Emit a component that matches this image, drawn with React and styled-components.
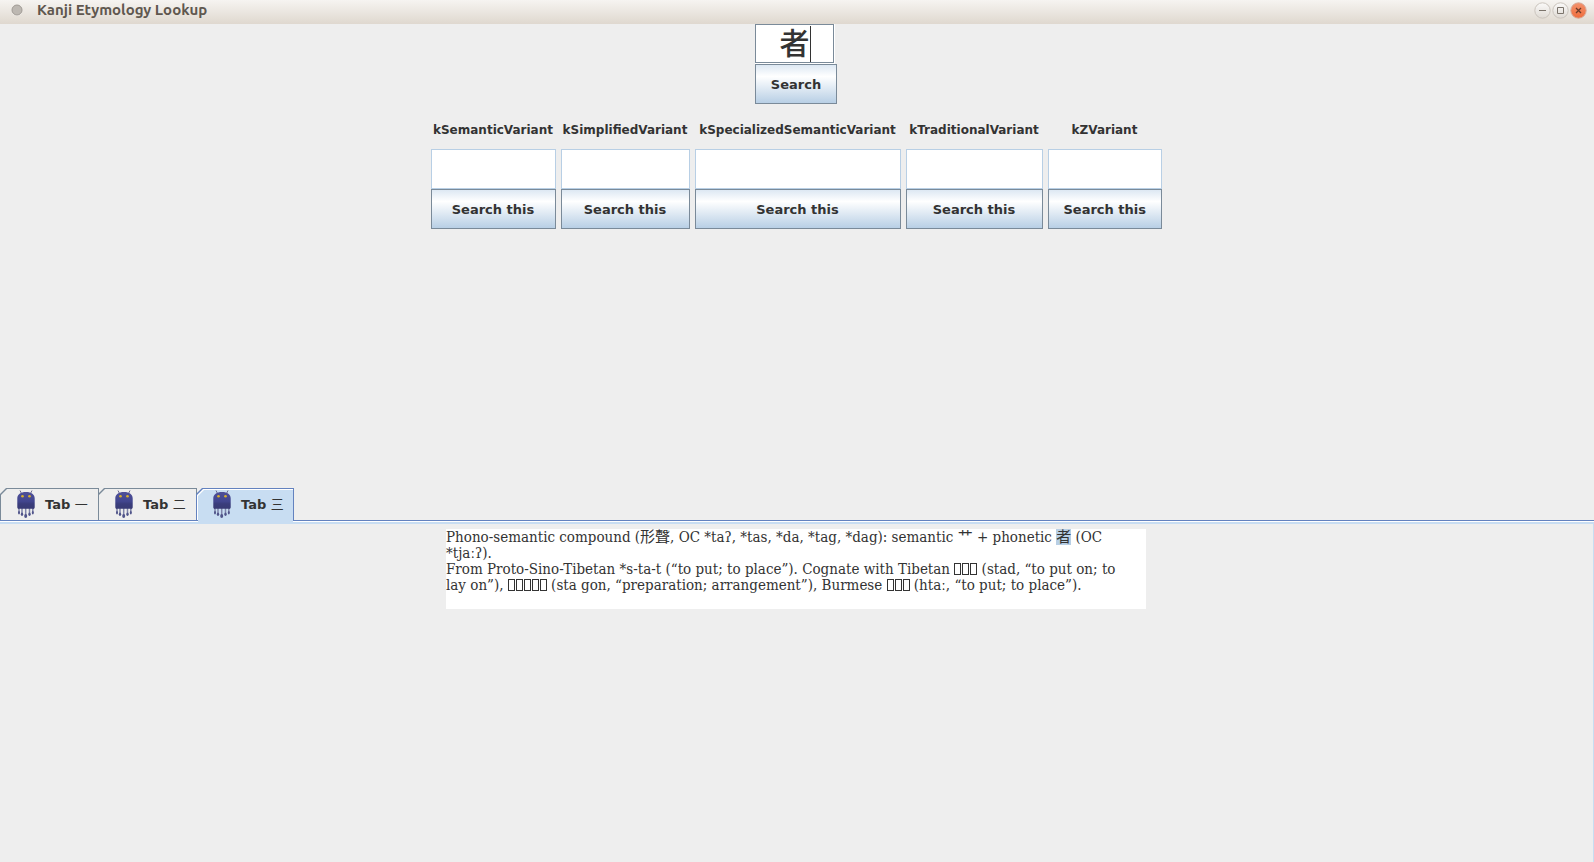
import React, { useState } from "react";
import styled, { createGlobalStyle, css } from "styled-components";

const GlobalStyle = createGlobalStyle`
  * { box-sizing: border-box; }
  body {
    margin: 0;
    background: #eeeeee;
    color: #333333;
    font-family: "DejaVu Sans", "Noto Sans CJK JP", sans-serif;
    font-size: 13px;
  }
`;

const Window = styled.div`
  display: flex;
  flex-direction: column;
  min-height: 100vh;
`;

const TitleBar = styled.header`
  display: flex;
  align-items: center;
  height: 24px;
  padding: 0 7px 4px 11px;
  background: linear-gradient(#f6f4f1, #dfd8cf);
`;

const Title = styled.h1`
  flex: 1;
  margin: 0 0 0 14px;
  font: 700 15px/20px Ubuntu, "Noto Sans", sans-serif;
  color: #5f574f;
`;

const WindowButtons = styled.div`
  display: flex;
  gap: 1px;
`;

const WindowButton = styled.button`
  display: block;
  width: 17px;
  height: 17px;
  padding: 0;
  border: 0;
  background: none;
  svg { display: block; }
`;

const Lookup = styled.main`
  flex: 464 0 0;
  display: flex;
  flex-direction: column;
  align-items: center;
  padding-right: 2px;
`;

const SearchForm = styled.form`
  display: flex;
  flex-direction: column;
  align-items: center;
`;

const KanjiField = styled.div`
  position: relative;
  width: 80px;
  height: 40px;
  padding: 0 1px 1px 0;
  margin-right: 2px;
  background: #ffffff;
`;

const KanjiInput = styled.input`
  display: block;
  width: 100%;
  height: 39px;
  padding: 0 0 5px;
  border: 1px solid #7a8a99;
  background: #ffffff;
  color: #333333;
  font: 500 30px/32px "Noto Sans CJK JP", sans-serif;
  text-align: center;
  outline: none;
`;

const Caret = styled.span`
  position: absolute;
  left: calc(50% + 15px);
  top: 2px;
  width: 1px;
  height: 36px;
  background: #333333;
`;

const MetalButton = styled.button`
  height: 40px;
  padding: 2px 15px 0;
  border: 1px solid #7a8a99;
  border-radius: 0;
  background: linear-gradient(#dde8f3, #ffffff 30%, #b8cfe5);
  color: #333333;
  font: 700 13px/16px "DejaVu Sans", sans-serif;
  white-space: nowrap;
`;

const Variants = styled.section`
  display: grid;
  grid-template-columns: 125px 129px 206px 137px 114px;
  gap: 5px;
  margin-top: 8px;
`;

const Variant = styled.form`
  display: flex;
  flex-direction: column;
`;

const VariantLabel = styled.label`
  height: 37px;
  font-size: 12px;
  font-weight: 700;
  line-height: 36px;
  text-align: center;
  white-space: nowrap;
`;

const VariantInput = styled.input`
  width: 100%;
  height: 40px;
  border: 1px solid #b8cfe5;
  background: #ffffff;
  font: 400 30px/36px "Noto Sans CJK JP", sans-serif;
  text-align: center;
`;

const Tabbed = styled.section`
  flex: 374 0 0;
  display: flex;
  flex-direction: column;
`;

const TabList = styled.div`
  display: flex;
  height: 32px;
`;

const chamfer = css`
  clip-path: polygon(0 6px, 6px 0, 100% 0, 100% 100%, 0 100%);
`;

const Tab = styled.button`
  position: relative;
  display: flex;
  align-items: center;
  gap: 9px;
  width: 99px;
  height: 32px;
  margin: 0 -1px 0 0;
  padding: 0 0 0 16px;
  border: 0;
  background: none;
  color: #333333;
  font: 700 13px/16px "DejaVu Sans", "Noto Sans CJK JP", sans-serif;
  z-index: ${(p) => (p["aria-selected"] ? 1 : 0)};
  &:last-child { width: 98px; }
`;

const TabEdge = styled.span`
  position: absolute;
  inset: 0;
  background: ${(p) => (p.$active ? "#6382bf" : "#7a8a99")};
  ${chamfer}
`;

const TabShine = styled.span`
  position: absolute;
  inset: 1px 1px 0 1px;
  background: ${(p) => (p.$active ? "#ffffff" : "#eeeeee")};
  ${chamfer}
`;

const TabFill = styled.span`
  position: absolute;
  inset: 2px 1px -4px 2px;
  background: #c8ddf2;
  ${chamfer}
`;

const TabIcon = styled.svg`
  position: relative;
  flex: none;
  width: 20px;
  height: 28px;
`;

const TabText = styled.span`
  position: relative;
  padding-top: 2px;
  white-space: pre;
`;

const Numeral = styled.span`
  font-weight: 400;
`;

const TabPanel = styled.div`
  flex: 1;
  display: flex;
  border-top: 1px solid #6382bf;
`;

const PanelEdge = styled.div`
  flex: 1;
  display: flex;
  justify-content: center;
  align-items: flex-start;
  margin-top: 1px;
  padding: 5px 1px 0 0;
  border-top: 2px solid #c8ddf2;
  border-right: 1px solid #c8ddf2;
  box-shadow: 0 -1px #ffffff;
`;

const Etymology = styled.article`
  width: 700px;
  height: 80px;
  background: #ffffff;
  font: 400 15px/16px "DejaVu Serif Condensed", "DejaVu Serif", "Noto Sans CJK JP", serif;
  font-stretch: condensed;
  white-space: nowrap;
`;

const Paragraph = styled.p`
  margin: 0;
`;

const Selected = styled.mark`
  display: inline-block;
  height: 16px;
  background: #b8cfe5;
  color: inherit;
`;

const MissingRun = styled.span`
  display: inline-flex;
  gap: 1px;
  vertical-align: -1px;
`;

const MissingGlyph = styled.span`
  width: 7px;
  height: 12px;
  border: 1px solid #333333;
`;

function Missing({ count, label }) {
  return (
    <MissingRun role="img" aria-label={label}>
      {Array.from({ length: count }, (_, i) => (
        <MissingGlyph key={i} />
      ))}
    </MissingRun>
  );
}

function JellyIcon({ id }) {
  return (
    <TabIcon viewBox="0 0 20 28" aria-hidden="true">
      <defs>
        <linearGradient id={id} x2="0" y2="1">
          <stop offset="0" stopColor="#4e4f98" />
          <stop offset="0.550" stopColor="#42468f" />
          <stop offset="0.700" stopColor="#3a3d7c" />
          <stop offset="1" stopColor="#383a74" />
        </linearGradient>
      </defs>
      <path d="M5.500 3.500 4 .5M14.500 3.500 16 .5" stroke="#6d6a90" fill="none" />
      <path
        d="M3 17v6M6 17v7M9.700 17v9M13.500 17v7M16.800 17v6"
        stroke="#7d82a8"
        strokeWidth="1.500"
        fill="none"
      />
      <path
        d="M1.300 17.500V8.500C1.300 4.500 4.500 2 10 2s8.700 2.500 8.700 6.500v9q-.2 1.700-2 1.300H3.300q-1.800.4-2-1.300Z"
        fill={`url(#${id})`}
      />
      <g fill="#50548a">
        <ellipse cx="3" cy="22.800" rx="1" ry="1.700" />
        <ellipse cx="6" cy="24.300" rx="1.200" ry="1.800" />
        <ellipse cx="9.700" cy="26" rx="1.500" ry="1.900" />
        <ellipse cx="13.500" cy="24.300" rx="1.200" ry="1.800" />
        <ellipse cx="16.800" cy="22.800" rx="1" ry="1.700" />
      </g>
      <circle cx="6.500" cy="6.300" r="1.300" fill="#d8b02e" />
      <circle cx="13.500" cy="6.300" r="1.300" fill="#d8b02e" />
    </TabIcon>
  );
}

function ControlIcon({ kind }) {
  const close = kind === "close";
  return (
    <svg width="17" height="17" viewBox="0 0 17 17" aria-hidden="true">
      <defs>
        <linearGradient id={kind} x2="0" y2="1">
          <stop offset="0" stopColor={close ? "#f3926d" : "#fbfaf9"} />
          <stop offset="1" stopColor={close ? "#ef6c3c" : "#dfdad4"} />
        </linearGradient>
      </defs>
      <circle cx="8.500" cy="8.500" r="7.700" fill={`url(#${kind})`} stroke={close ? "#d6a999" : "#cac4bd"} />
      {kind === "minimize" && <path d="M5 8.500h7" stroke="#7b746c" />}
      {kind === "maximize" && <path d="M5.500 5.500h6v6h-6z" fill="none" stroke="#7b746c" />}
      {close && <path d="M6 6l5 5M11 6l-5 5" stroke="#6b3a28" strokeWidth="1.300" />}
    </svg>
  );
}

const variants = [
  "kSemanticVariant",
  "kSimplifiedVariant",
  "kSpecializedSemanticVariant",
  "kTraditionalVariant",
  "kZVariant",
];

export default function App() {
  const [kanji, setKanji] = useState("者");
  const [active, setActive] = useState(2);
  const stop = (e) => e.preventDefault();

  return (
    <Window>
      <GlobalStyle />
      <TitleBar>
        <svg width="12" height="12" viewBox="0 0 12 12" aria-hidden="true">
          <circle cx="6" cy="7" r="5" fill="#f4f1ee" />
          <circle cx="6" cy="6" r="5" fill="#bdb8b2" stroke="#a09b95" />
        </svg>
        <Title>Kanji Etymology Lookup</Title>
        <WindowButtons>
          {["minimize", "maximize", "close"].map((kind) => (
            <WindowButton key={kind} type="button" aria-label={kind}>
              <ControlIcon kind={kind} />
            </WindowButton>
          ))}
        </WindowButtons>
      </TitleBar>

      <Lookup>
        <SearchForm onSubmit={stop}>
          <KanjiField>
            <KanjiInput aria-label="Kanji" value={kanji} onChange={(e) => setKanji(e.target.value)} />
            <Caret />
          </KanjiField>
          <MetalButton>Search</MetalButton>
        </SearchForm>
        <Variants>
          {variants.map((name) => (
            <Variant key={name} onSubmit={stop}>
              <VariantLabel htmlFor={name}>{name}</VariantLabel>
              <VariantInput id={name} />
              <MetalButton>Search this</MetalButton>
            </Variant>
          ))}
        </Variants>
      </Lookup>

      <Tabbed>
        <TabList role="tablist">
          {["一", "二", "三"].map((n, i) => (
            <Tab key={n} type="button" role="tab" aria-selected={i === active} onClick={() => setActive(i)}>
              <TabEdge $active={i === active} />
              <TabShine $active={i === active} />
              {i === active && <TabFill />}
              <JellyIcon id={`jelly-${i}`} />
              <TabText>
                Tab <Numeral>{n}</Numeral>
              </TabText>
            </Tab>
          ))}
        </TabList>
        <TabPanel role="tabpanel">
          <PanelEdge>
            <Etymology>
              <Paragraph>
                Phono-semantic compound (形聲, OC *taʔ, *tas, *da, *tag, *dag): semantic 艹 + phonetic{" "}
                <Selected>者</Selected> (OC
                <br />
                *tjaːʔ).
              </Paragraph>
              <Paragraph>
                From Proto-Sino-Tibetan *s-ta-t (“to put; to place”). Cognate with Tibetan{" "}
                <Missing count={3} label="Tibetan word" /> (stad, “to put on; to
                <br />
                lay on”), <Missing count={5} label="Tibetan word" /> (sta gon, “preparation; arrangement”),
                Burmese <Missing count={3} label="Burmese word" /> (htaː, “to put; to place”).
              </Paragraph>
            </Etymology>
          </PanelEdge>
        </TabPanel>
      </Tabbed>
    </Window>
  );
}
